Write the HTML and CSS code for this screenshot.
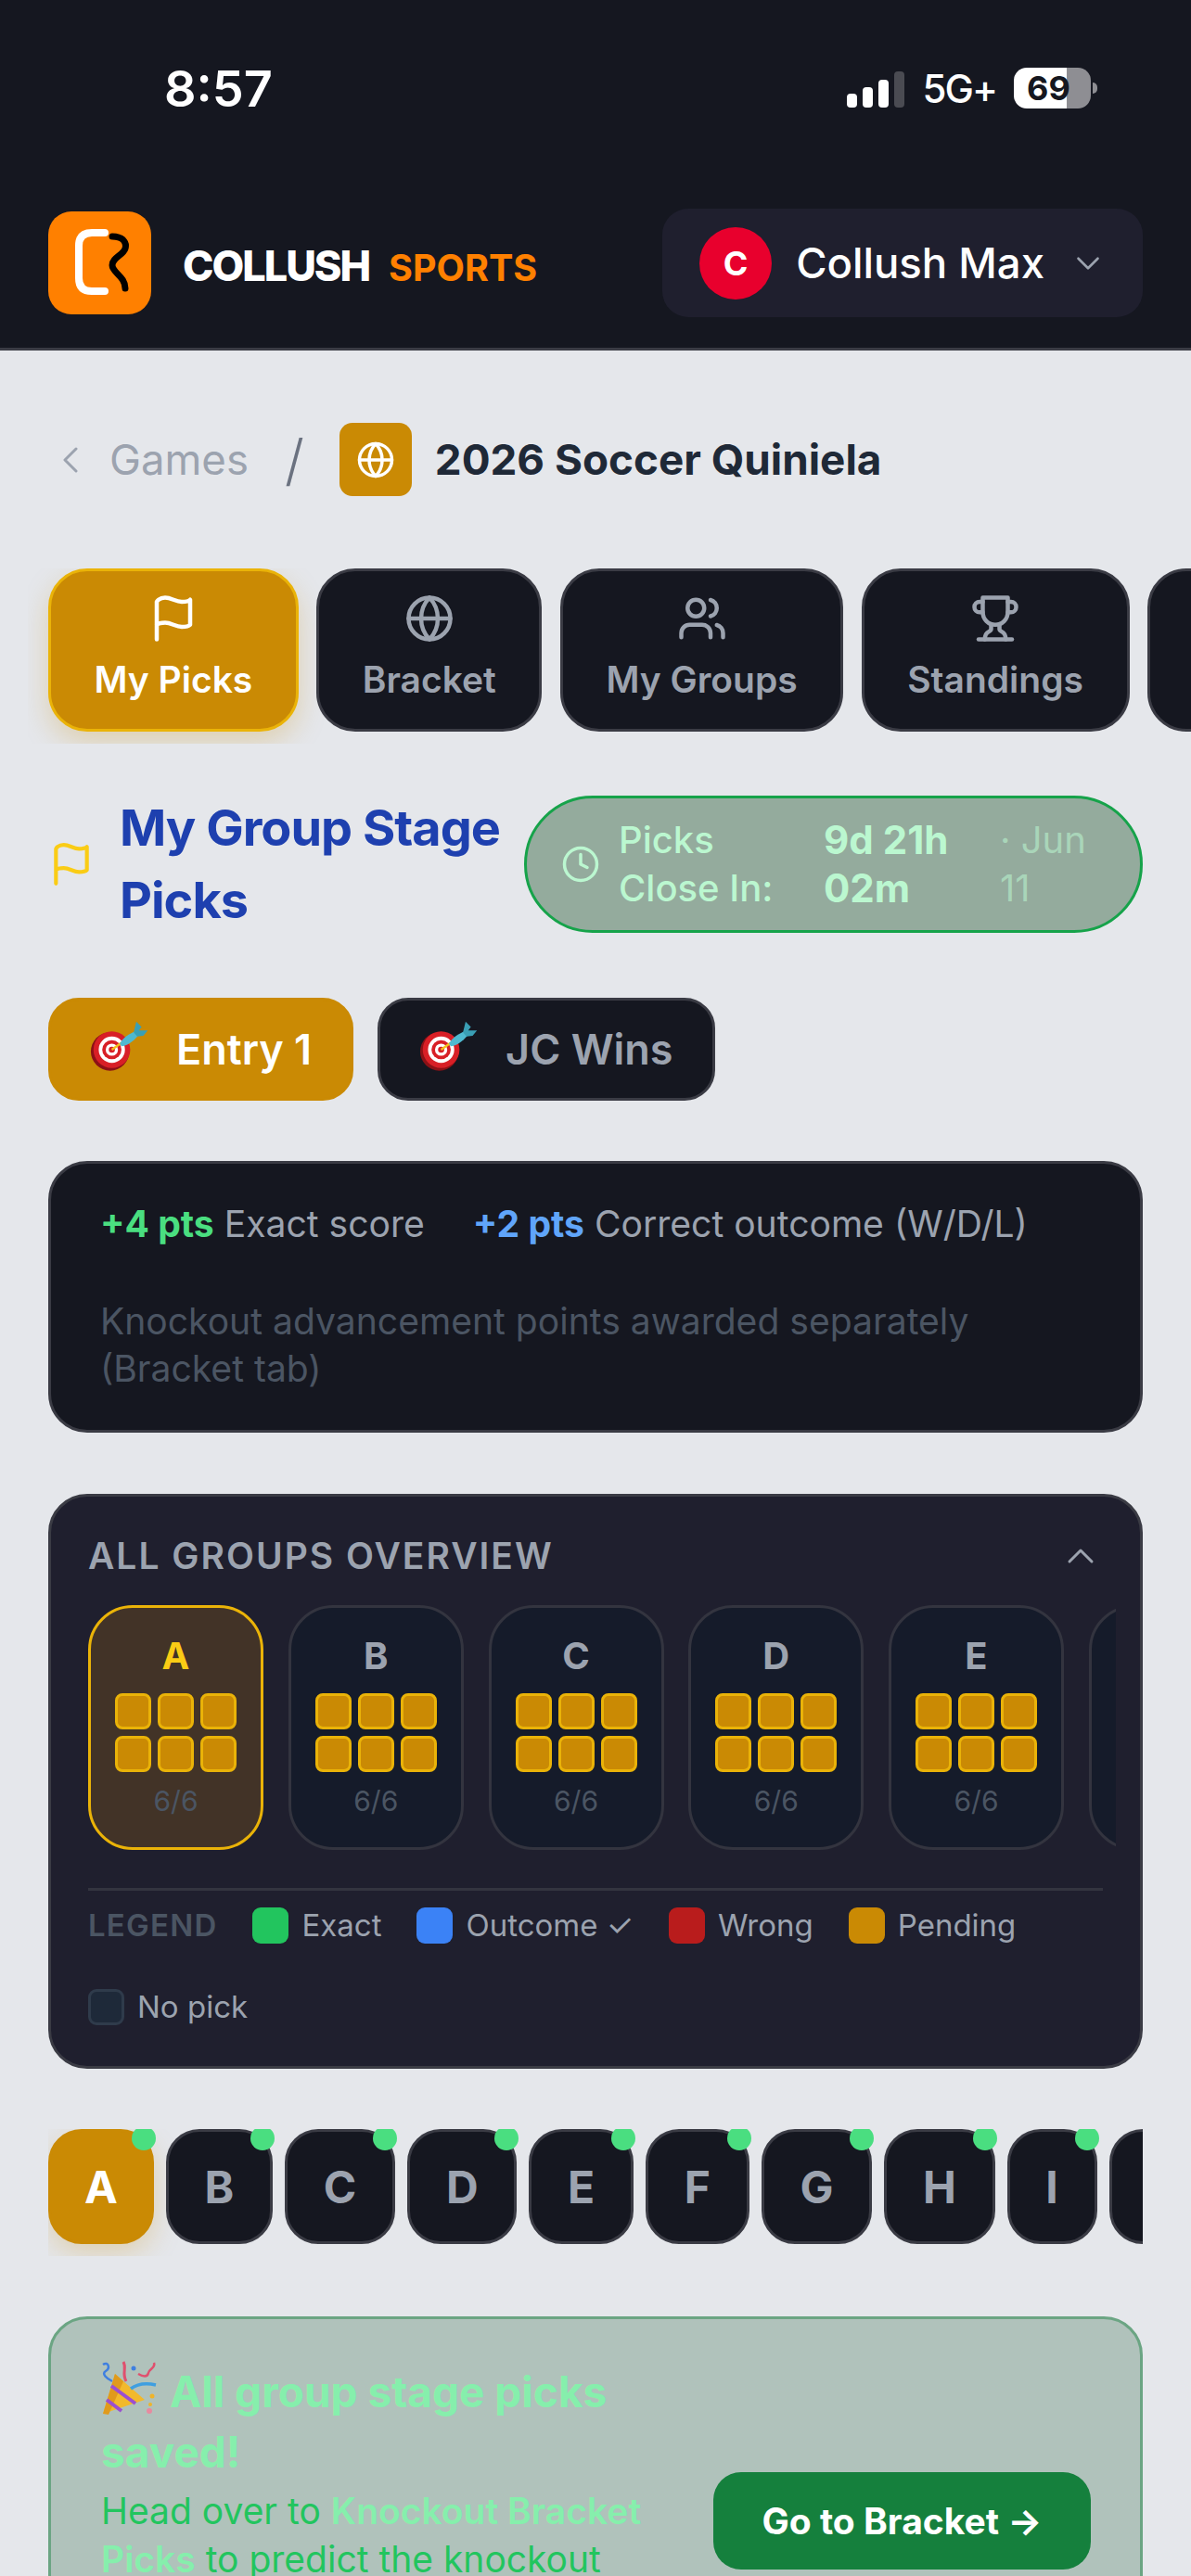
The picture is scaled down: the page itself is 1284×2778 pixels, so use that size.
FILE: index.html
```html
<!DOCTYPE html>
<html lang="en">
<head>
    <meta charset="UTF-8">
    <meta name="viewport" content="width=device-width, initial-scale=1.0">
    <title>Collush Sports</title>
    <link rel="stylesheet" href="styles.css">
</head>
<body>
    <header class="top">
        <div class="status-bar">
            <span class="time">8:57</span>
            <div class="status-right">
                <div class="signal">
                    <i class="bar-1"></i><i class="bar-2"></i><i class="bar-3"></i><i class="bar-4"></i>
                </div>
                <span class="network">5G+</span>
                <div class="battery"><span>69</span></div>
                <i class="battery-cap"></i>
            </div>
        </div>
        <div class="brand-row">
            <div class="brand">
                <svg class="logo" viewBox="0 0 111 111">
                    <rect width="111" height="111" rx="25" fill="#ff8000"/>
                    <path d="M61 23H47Q33 23 33 37V72Q33 86 47 86H61" fill="none" stroke="#fff" stroke-width="8" stroke-linecap="round"/>
                    <path d="M69 27C80 27 85 33 83 40C81 47 69 50 69 58C69 66 83 70 83 83" fill="none" stroke="#000" stroke-width="7" stroke-linecap="round"/>
                </svg>
                <div class="brand-name">COLLUSH <span>SPORTS</span></div>
            </div>
            <div class="account">
                <div class="avatar">C</div>
                <span class="account-name">Collush Max</span>
                <svg class="icon thin account-chevron" viewBox="0 0 24 24"><path d="m6 9 6 6 6-6"/></svg>
            </div>
        </div>
    </header>

    <main class="page">
        <nav class="crumbs">
            <svg class="icon thin crumb-back" viewBox="0 0 24 24"><path d="m15 18-6-6 6-6"/></svg>
            <span class="crumb-link">Games</span>
            <span class="crumb-sep">/</span>
            <div class="crumb-title">
                <div class="crumb-icon">
                    <svg class="icon" viewBox="0 0 24 24"><circle cx="12" cy="12" r="10"/><path d="M12 2a14.5 14.5 0 0 0 0 20 14.5 14.5 0 0 0 0-20"/><path d="M2 12h20"/></svg>
                </div>
                <h1>2026 Soccer Quiniela</h1>
            </div>
        </nav>

        <div class="tabs">
            <div class="tab active">
                <svg class="icon" viewBox="0 0 24 24"><path d="M4 22V4s1-2 4-2 5 2 8 2 4-1 4-1v12s-1 1-4 1-5-2-8-2-4 1-4 1"/></svg>
                <span>My Picks</span>
            </div>
            <div class="tab">
                <svg class="icon" viewBox="0 0 24 24"><circle cx="12" cy="12" r="10"/><path d="M12 2a14.5 14.5 0 0 0 0 20 14.5 14.5 0 0 0 0-20"/><path d="M2 12h20"/></svg>
                <span>Bracket</span>
            </div>
            <div class="tab">
                <svg class="icon" viewBox="0 0 24 24"><path d="M16 21v-2a4 4 0 0 0-4-4H6a4 4 0 0 0-4 4v2"/><circle cx="9" cy="7" r="4"/><path d="M22 21v-2a4 4 0 0 0-3-3.87"/><path d="M16 3.13a4 4 0 0 1 0 7.75"/></svg>
                <span>My Groups</span>
            </div>
            <div class="tab">
                <svg class="icon" viewBox="0 0 24 24"><path d="M6 9H4.5a2.5 2.5 0 0 1 0-5H6"/><path d="M18 9h1.5a2.5 2.5 0 0 0 0-5H18"/><path d="M4 22h16"/><path d="M10 14.66V17c0 .55-.47.98-.97 1.21C7.85 18.75 7 20.24 7 22"/><path d="M14 14.66V17c0 .55.47.98.97 1.21C16.15 18.75 17 20.24 17 22"/><path d="M18 2H6v7a6 6 0 0 0 12 0V2Z"/></svg>
                <span>Standings</span>
            </div>
            <div class="tab">
                <span>Rules</span>
            </div>
        </div>

        <div class="section-head">
            <svg class="icon section-flag" viewBox="0 0 24 24"><path d="M4 22V4s1-2 4-2 5 2 8 2 4-1 4-1v12s-1 1-4 1-5-2-8-2-4 1-4 1"/></svg>
            <h2>My Group Stage Picks</h2>
            <div class="countdown">
                <svg class="icon" viewBox="0 0 24 24"><circle cx="12" cy="12" r="10"/><path d="M12 6v6l4 2"/></svg>
                <span class="count-label">Picks Close&nbsp;In:</span>
                <span class="count-time">9d 21h 02m</span>
                <span class="count-date">· Jun 11</span>
            </div>
        </div>

        <div class="entries">
            <div class="entry active">
                <svg class="dart" viewBox="0 0 70 70">
                    <circle cx="23" cy="37" r="22" fill="#8c1116"/>
                    <circle cx="25" cy="35" r="21" fill="#d81f26"/>
                    <circle cx="25" cy="35" r="15" fill="#fff"/>
                    <circle cx="25" cy="35" r="11" fill="#d81f26"/>
                    <circle cx="25" cy="35" r="7" fill="#fff"/>
                    <circle cx="25" cy="35" r="3.5" fill="#d81f26"/>
                    <path d="M25 35 36 27" stroke="#f2c21b" stroke-width="2.5"/>
                    <path d="M34 28C38 21 46 16 52 14L55 19C50 25 42 31 36 31Z" fill="#4fb9d0"/>
                    <path d="M50 15 53 3 59 9 56 13 66 13 61 19 54 20Z" fill="#3a9fb5"/>
                </svg>
                <span>Entry 1</span>
            </div>
            <div class="entry">
                <svg class="dart" viewBox="0 0 70 70">
                    <circle cx="23" cy="37" r="22" fill="#8c1116"/>
                    <circle cx="25" cy="35" r="21" fill="#d81f26"/>
                    <circle cx="25" cy="35" r="15" fill="#fff"/>
                    <circle cx="25" cy="35" r="11" fill="#d81f26"/>
                    <circle cx="25" cy="35" r="7" fill="#fff"/>
                    <circle cx="25" cy="35" r="3.5" fill="#d81f26"/>
                    <path d="M25 35 36 27" stroke="#f2c21b" stroke-width="2.5"/>
                    <path d="M34 28C38 21 46 16 52 14L55 19C50 25 42 31 36 31Z" fill="#4fb9d0"/>
                    <path d="M50 15 53 3 59 9 56 13 66 13 61 19 54 20Z" fill="#3a9fb5"/>
                </svg>
                <span>JC Wins</span>
            </div>
        </div>

        <section class="scoring">
            <div class="scoring-row">
                <span><b class="green">+4 pts</b> Exact score</span>
                <span><b class="blue">+2 pts</b> Correct outcome (W/D/L)</span>
            </div>
            <p>Knockout advancement points awarded separately (Bracket tab)</p>
        </section>

        <section class="overview">
            <div class="overview-head">
                <h3>ALL GROUPS OVERVIEW</h3>
                <svg class="icon thin" viewBox="0 0 24 24"><path d="m18 15-6-6-6 6"/></svg>
            </div>
            <div class="group-cards" id="group-cards"></div>
            <div class="legend">
                <span class="legend-title">LEGEND</span>
                <span class="legend-item"><i class="swatch exact"></i>Exact</span>
                <span class="legend-item"><i class="swatch outcome"></i>Outcome ✓</span>
                <span class="legend-item"><i class="swatch wrong"></i>Wrong</span>
                <span class="legend-item"><i class="swatch pending"></i>Pending</span>
                <span class="legend-item"><i class="swatch empty"></i>No pick</span>
            </div>
        </section>

        <div class="letters" id="letters"></div>

        <section class="saved">
            <div class="saved-text">
                <h3>
                    <svg class="popper" viewBox="0 0 60 60">
                        <path d="M2 57 15 14 47 42Z" fill="#f2b92c"/>
                        <path d="M2 57 15 14 24 22 8 58Z" fill="#e09a1c"/>
                        <path d="M11 27 37 46M6 42 22 54" stroke="#9b4fd1" stroke-width="4"/>
                        <path d="M2 4C8 0 10 8 5 11S6 19 12 22" fill="none" stroke="#3f7fe0" stroke-width="2.5"/>
                        <path d="M24 1C28 8 22 13 27 22" fill="none" stroke="#e0506e" stroke-width="3"/>
                        <path d="M57 2C59 8 52 8 51 13S45 17 40 14" fill="none" stroke="#e0506e" stroke-width="2.5"/>
                        <path d="M32 30C40 24 50 24 59 26" fill="none" stroke="#3f9fe0" stroke-width="3.5"/>
                        <circle cx="35" cy="8" r="2.5" fill="#3f7fe0"/>
                        <circle cx="55" cy="38" r="2.5" fill="#f0b429"/>
                        <circle cx="53" cy="47" r="2" fill="#f0b429"/>
                        <circle cx="52" cy="54" r="3" fill="#e88aa0"/>
                    </svg>
                    All group stage picks saved!
                </h3>
                <p>Head over to <b>Knockout Bracket Picks</b> to predict the knockout rounds, from the round of 32 through the final match.</p>
            </div>
            <div class="bracket-btn">Go to Bracket →</div>
        </section>
    </main>

    <script src="script.js"></script>
</body>
</html>
```

FILE: script.js
```js
const groupCards = document.getElementById("group-cards");
const letters = document.getElementById("letters");

"ABCDEF".split("").forEach((name, i) => {
    const card = document.createElement("div");
    card.classList.add("group-card");
    if (i == 0) card.classList.add("active");

    const title = document.createElement("div");
    title.classList.add("group-name");
    title.textContent = name;
    card.appendChild(title);

    const grid = document.createElement("div");
    grid.classList.add("pick-grid");
    for (let x = 0; x < 6; x++) {
        const cell = document.createElement("i");
        grid.appendChild(cell);
    }
    card.appendChild(grid);

    const count = document.createElement("div");
    count.classList.add("group-count");
    count.textContent = "6/6";
    card.appendChild(count);

    groupCards.appendChild(card);
});

"ABCDEFGHIJ".split("").forEach((name, i) => {
    const btn = document.createElement("div");
    btn.classList.add("letter");
    if (i == 0) btn.classList.add("active");
    btn.textContent = name;

    const dot = document.createElement("i");
    btn.appendChild(dot);

    letters.appendChild(btn);
});
```

FILE: styles.css
```css
*{
    margin: 0;
    padding: 0;
    box-sizing: border-box;
}

html, body{
    height: 2778px;
    overflow: hidden;
}

body{
    background-color: #e5e7eb;
    font-family: "Inter", "Liberation Sans", sans-serif;
    color: #9ca3af;
}

.icon{
    fill: none;
    stroke: currentColor;
    stroke-width: 2;
    stroke-linecap: round;
    stroke-linejoin: round;
    display: block;
    flex: none;
}

.icon.thin{
    stroke-width: 1.5;
}

/* top bar */
.top{
    background-color: #151720;
    border-bottom: 3px solid #3a3b44;
}

.status-bar{
    height: 190px;
    display: flex;
    align-items: center;
    justify-content: space-between;
    padding: 0 101px 0 177px;
    color: white;
}

.time{
    font-size: 54px;
    font-weight: 600;
}

.status-right{
    display: flex;
    align-items: center;
}

.signal{
    display: flex;
    align-items: flex-end;
    gap: 6px;
    height: 39px;
    margin-top: 2px;
}

.signal i{
    width: 11px;
    background-color: white;
    border-radius: 4px;
}

.bar-1{ height: 15px; }
.bar-2{ height: 22px; }
.bar-3{ height: 30px; }
.signal .bar-4{ height: 39px; background-color: #4a4b52; }

.network{
    font-size: 42px;
    font-weight: 500;
    margin-left: 20px;
    letter-spacing: -2px;
}

.battery{
    width: 83px;
    height: 44px;
    margin-left: 19px;
    border-radius: 14px;
    background: linear-gradient(to right, white 69%, #8e8e93 69%);
    color: #151720;
    font-size: 36px;
    font-weight: 700;
    display: flex;
    align-items: center;
    padding-left: 14px;
}

.battery-cap{
    width: 5px;
    height: 12px;
    margin-left: 2px;
    background-color: #8e8e93;
    border-radius: 0 6px 6px 0;
}

.brand-row{
    display: flex;
    align-items: center;
    justify-content: space-between;
    padding: 35px 52px 33px;
}

.brand{
    display: flex;
    align-items: center;
    gap: 34px;
}

.logo{
    width: 111px;
    height: 111px;
    display: block;
}

.brand-name{
    font-size: 45px;
    font-weight: 800;
    color: white;
    letter-spacing: -2px;
    margin-top: 6px;
}

.brand-name span{
    font-size: 39.5px;
    font-weight: 700;
    color: #ff8000;
    letter-spacing: 0;
    margin-left: 13px;
}

.account{
    display: flex;
    align-items: center;
    gap: 26px;
    height: 117px;
    padding: 0 38px 0 40px;
    background-color: #1f1f2e;
    border-radius: 28px;
}

.avatar{
    width: 78px;
    height: 78px;
    border-radius: 50%;
    background-color: #e8002d;
    color: white;
    font-size: 36px;
    font-weight: 700;
    display: flex;
    align-items: center;
    justify-content: center;
}

.account-name{
    font-size: 45.5px;
    font-weight: 500;
    color: white;
}

.account-chevron{
    width: 42px;
    height: 42px;
}

/* breadcrumb */
.page{
    padding: 78px 52px 0;
}

.crumbs{
    display: flex;
    align-items: center;
    height: 79px;
}

.crumb-back{
    width: 48px;
    height: 48px;
    margin-right: 18px;
}

.crumb-link{
    font-size: 45.5px;
}

.crumb-sep{
    font-size: 60px;
    font-weight: 300;
    color: #6b7280;
    margin: 0 38px 0 39px;
}

.crumb-title{
    display: flex;
    align-items: center;
    gap: 25px;
}

.crumb-icon{
    width: 78px;
    height: 79px;
    background-color: #ca8a04;
    border-radius: 14px;
    color: white;
    display: flex;
    align-items: center;
    justify-content: center;
}

.crumb-icon .icon{
    width: 42px;
    height: 42px;
}

h1{
    font-size: 45.8px;
    font-weight: 700;
    color: #1f2937;
}

/* tabs */
.tabs{
    display: flex;
    gap: 19.5px;
    margin: 78px -52px 0 -22px;
    padding: 0 0 13px 22px;
    overflow: hidden;
}

.tab{
    flex: none;
    display: flex;
    flex-direction: column;
    align-items: center;
    height: 176px;
    padding: 24px 46.5px 0;
    background-color: #151720;
    border: 3px solid #3a3b44;
    border-radius: 42px;
}

.tab .icon{
    width: 54px;
    height: 54px;
    margin-bottom: 9px;
}

.tab span{
    font-size: 39px;
    font-weight: 600;
    line-height: 60px;
}

.tab.active{
    background-color: #ca8a04;
    border-color: #eab308;
    color: white;
    box-shadow: 0 12px 30px rgba(202, 138, 4, 0.25);
}

/* heading */
.section-head{
    display: flex;
    align-items: center;
    gap: 18px;
    margin-top: 52px;
}

.section-flag{
    width: 50px;
    height: 50px;
    margin-right: 9px;
    color: #facc15;
}

h2{
    flex: 1;
    font-size: 54px;
    font-weight: 700;
    line-height: 78px;
    letter-spacing: -1px;
    color: #1e40af;
}

.countdown{
    flex: none;
    width: 667px;
    height: 148px;
    display: flex;
    align-items: center;
    padding-left: 37px;
    background-color: #94ab9d;
    border: 3px solid #16a34a;
    border-radius: 74px;
    color: #bbf7d0;
    font-size: 40px;
    line-height: 52px;
}

.countdown .icon{
    width: 42px;
    height: 42px;
    margin-right: 20px;
}

.count-label{
    width: 221px;
    font-weight: 500;
}

.count-time{
    width: 190px;
    font-size: 42px;
    font-weight: 700;
}

.count-date{
    width: 100px;
    color: #a9d5b9;
}

/* entries */
.entries{
    display: flex;
    gap: 26px;
    margin-top: 66px;
}

.entry{
    display: flex;
    align-items: center;
    gap: 27px;
    height: 111px;
    padding: 0 42px;
    background-color: #151720;
    border: 3px solid #3a3b44;
    border-radius: 33px;
    font-size: 45px;
    font-weight: 600;
}

.entry.active{
    background-color: #ca8a04;
    border-color: #ca8a04;
    color: white;
}

.dart{
    width: 66px;
    height: 66px;
    display: block;
    flex: none;
}

/* scoring */
.scoring{
    margin-top: 65px;
    padding: 39px 53px 41px;
    background-color: #151720;
    border: 3px solid #3a3b44;
    border-radius: 42px;
    font-size: 39.1px;
    line-height: 51px;
}

.scoring-row{
    display: flex;
    gap: 52px;
}

.scoring b{
    font-weight: 700;
}

.green{ color: #4ade80; }
.blue{ color: #60a5fa; }

.scoring p{
    margin-top: 54px;
    color: #4b5563;
}

/* overview */
.overview{
    margin-top: 66px;
    padding: 38px 40px 44px;
    background-color: #1f1f2e;
    border: 3px solid #3a3b44;
    border-radius: 42px;
}

.overview-head{
    display: flex;
    align-items: center;
    justify-content: space-between;
    height: 51px;
}

.overview-head h3{
    font-size: 39px;
    font-weight: 600;
    letter-spacing: 2px;
}

.overview-head .icon{
    width: 48px;
    height: 48px;
}

.group-cards{
    display: flex;
    gap: 26.75px;
    margin: 28px -14px 0 0;
    overflow: hidden;
}

.group-card{
    flex: none;
    width: 189px;
    height: 264px;
    padding-top: 28px;
    display: flex;
    flex-direction: column;
    align-items: center;
    background-color: #151b2a;
    border: 3px solid #33343f;
    border-radius: 48px;
}

.group-card.active{
    background-color: #423327;
    border-color: #eab308;
}

.group-name{
    font-size: 40px;
    font-weight: 700;
    line-height: 48px;
}

.group-card.active .group-name{
    color: #facc15;
}

.pick-grid{
    display: grid;
    grid-template-columns: repeat(3, 39px);
    gap: 7px;
    margin-top: 16px;
}

.pick-grid i{
    height: 39px;
    background-color: #ca8a04;
    border: 3px solid #eab308;
    border-radius: 8px;
}

.group-count{
    margin-top: 13px;
    font-size: 30px;
    line-height: 36px;
    color: #4b5563;
}

.legend{
    display: flex;
    flex-wrap: wrap;
    align-items: center;
    gap: 48px 38px;
    margin-top: 41px;
    padding-top: 17px;
    border-top: 3px solid #33343f;
    font-size: 33px;
}

.legend-title{
    font-weight: 600;
    letter-spacing: 1.2px;
    color: #4b5563;
}

.legend-item{
    display: flex;
    align-items: center;
    gap: 14px;
}

.swatch{
    width: 39px;
    height: 39px;
    border-radius: 9px;
}

.exact{ background-color: #22c55e; }
.outcome{ background-color: #3b82f6; }
.wrong{ background-color: #b91c1c; }
.pending{ background-color: #ca8a04; }
.empty{ background-color: #1e2939; border: 3px solid #2f3b4b; }

/* letters */
.letters{
    display: flex;
    gap: 13px;
    margin-top: 65px;
    padding-bottom: 13px;
    overflow: hidden;
}

.letter{
    position: relative;
    flex: none;
    height: 124px;
    padding: 0 38.75px;
    display: flex;
    align-items: center;
    background-color: #151720;
    border: 3px solid #3a3b44;
    border-radius: 36px;
    font-size: 48px;
    font-weight: 700;
}

.letter.active{
    padding: 0 36px;
    background-color: #ca8a04;
    border-color: #ca8a04;
    color: white;
    box-shadow: 0 10px 30px rgba(202, 138, 4, 0.25);
}

.letter i{
    position: absolute;
    top: -6px;
    right: -5px;
    width: 26px;
    height: 26px;
    border-radius: 50%;
    background-color: #4ade80;
}

/* saved banner */
.saved{
    display: flex;
    align-items: center;
    gap: 48px;
    margin-top: 65px;
    padding: 45px 53px 48px 54px;
    background-color: #b0c2bb;
    border: 3px solid #6ba583;
    border-radius: 42px;
}

.saved-text{
    flex: 1;
}

.saved h3{
    font-size: 46px;
    font-weight: 700;
    line-height: 65px;
    color: #86efac;
}

.popper{
    width: 60px;
    height: 60px;
    vertical-align: -10px;
    margin-right: 3px;
}

.saved p{
    margin-top: 5px;
    font-size: 39px;
    line-height: 52px;
    color: #22c55e;
}

.saved p b{
    font-weight: 600;
    color: #86efac;
}

.bracket-btn{
    flex: none;
    width: 407px;
    height: 105px;
    display: flex;
    align-items: center;
    justify-content: center;
    background-color: #15803d;
    border-radius: 30px;
    color: white;
    font-size: 39px;
    font-weight: 700;
}
```
